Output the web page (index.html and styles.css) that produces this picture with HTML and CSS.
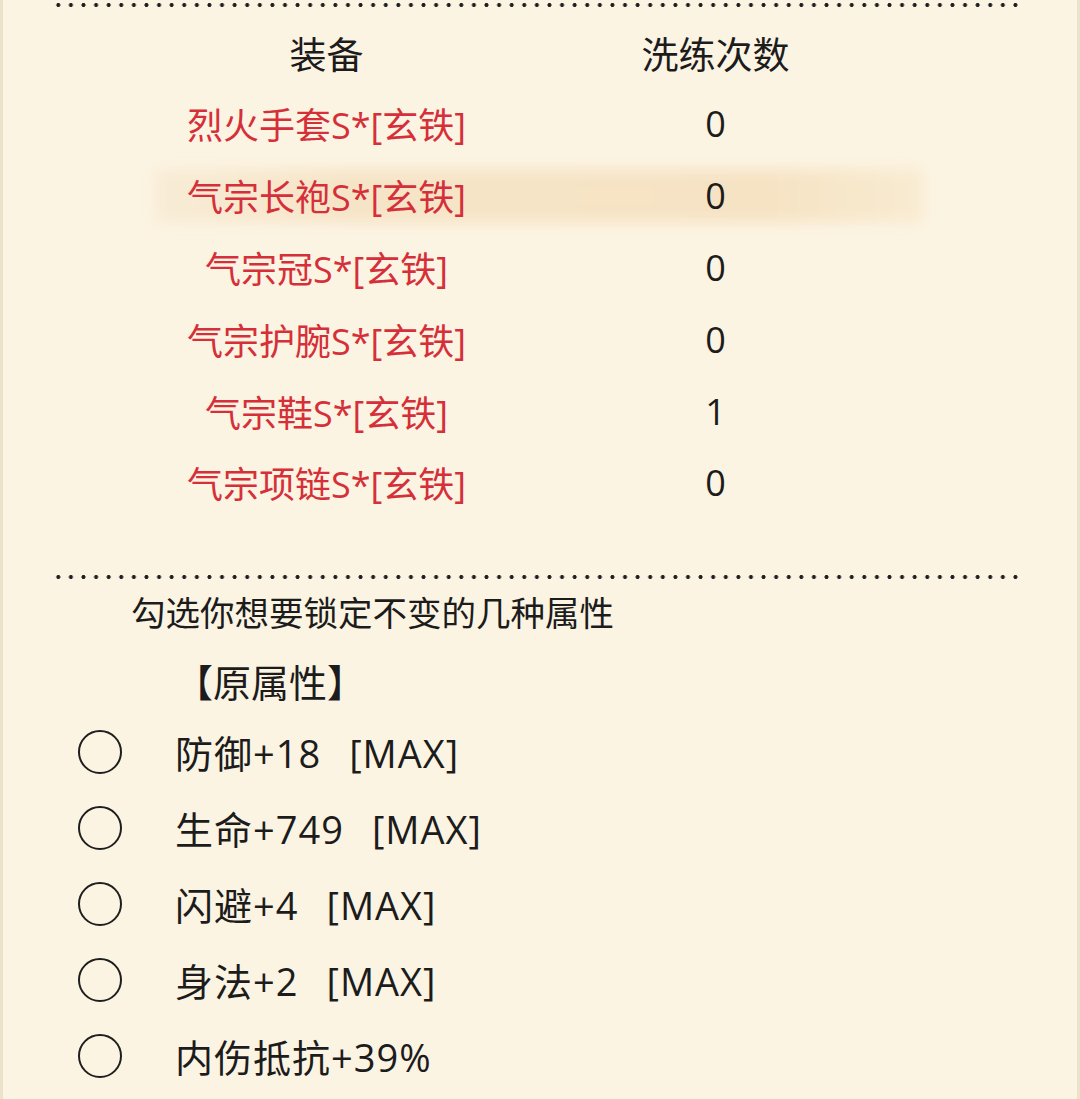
FILE: index.html
```html
<!DOCTYPE html>
<html lang="zh-CN">
<head>
    <meta charset="UTF-8">
    <meta name="viewport" content="width=device-width, initial-scale=1.0">
    <title>洗练</title>
    <link rel="stylesheet" href="styles.css">
</head>
<body>
    <div class="pagina">
        <div class="puntos puntos-arriba"></div>

        <table class="equipo">
            <thead>
                <tr>
                    <th>装备</th>
                    <th>洗练次数</th>
                </tr>
            </thead>
            <tbody>
                <tr>
                    <td class="nombre">烈火手套S*[玄铁]</td>
                    <td>0</td>
                </tr>
                <tr class="activo">
                    <td class="nombre">气宗长袍S*[玄铁]</td>
                    <td>0</td>
                </tr>
                <tr>
                    <td class="nombre">气宗冠S*[玄铁]</td>
                    <td>0</td>
                </tr>
                <tr>
                    <td class="nombre">气宗护腕S*[玄铁]</td>
                    <td>0</td>
                </tr>
                <tr>
                    <td class="nombre">气宗鞋S*[玄铁]</td>
                    <td>1</td>
                </tr>
                <tr>
                    <td class="nombre">气宗项链S*[玄铁]</td>
                    <td>0</td>
                </tr>
            </tbody>
        </table>

        <div class="puntos puntos-medio"></div>

        <p class="aviso">勾选你想要锁定不变的几种属性</p>
        <p class="titulo">【原属性】</p>

        <ul class="atributos">
            <li><span class="radio"></span><span class="texto">防御+18<span class="max">[MAX]</span></span></li>
            <li><span class="radio"></span><span class="texto">生命+749<span class="max">[MAX]</span></span></li>
            <li><span class="radio"></span><span class="texto">闪避+4<span class="max">[MAX]</span></span></li>
            <li><span class="radio"></span><span class="texto">身法+2<span class="max">[MAX]</span></span></li>
            <li><span class="radio"></span><span class="texto">内伤抵抗+39%</span></li>
        </ul>
    </div>
</body>
</html>
```

FILE: styles.css
```css
body {
    margin: 0;
    background-color: #fcf4e3;
    font-family: "Noto Sans CJK SC", sans-serif;
    color: #1c1c1c;
}

.pagina {
    height: 1099px;
    overflow: hidden;
    border-left: 3px solid #ece1c9;
    border-right: 3px solid #ece1c9;
    box-sizing: border-box;
}

/* lineas de puntos */
.puntos {
    height: 4px;
    margin: 0 55px 0 49px;
    background-image: radial-gradient(circle, #1e1e1e 1.7px, transparent 2.3px);
    background-size: 12.6px 4px;
    background-repeat: repeat-x;
}

.puntos-arriba {
    margin-top: 3px;
}

.puntos-medio {
    margin-top: 56px;
}

.equipo {
    margin-left: 129px;
    width: 778px;
    border-collapse: collapse;
    table-layout: fixed;
    font-family: "Open Sans", "Noto Sans CJK SC", sans-serif;
}

.equipo th {
    height: 70px;
    padding: 11px 0 0 0;
    font-size: 37px;
    font-weight: normal;
    text-align: center;
    vertical-align: middle;
}

.equipo td {
    height: 71.8px;
    padding: 0;
    font-size: 36px;
    text-align: center;
    vertical-align: middle;
    position: relative;
}

.equipo td.nombre {
    color: #d5303a;
}

/* fila seleccionada con brillo */
.equipo tr.activo td.nombre::before {
    content: "";
    position: absolute;
    top: 9px;
    bottom: 9px;
    left: 22px;
    right: -402px;
    background: linear-gradient(90deg, #f8ecd6, #f6e4c7 25%, #f6e3c4 80%, #f8ebd1);
    filter: blur(7px);
    z-index: -1;
}

.aviso {
    margin: 10px 0 0 128px;
    font-size: 34.5px;
    line-height: 44px;
}

.titulo {
    margin: 24px 0 0 172px;
    font-size: 38px;
    line-height: 48px;
}

.atributos {
    list-style: none;
    margin: 9px 0 0 0;
    padding: 0;
    font-family: "Open Sans", "Noto Sans CJK SC", sans-serif;
}

.atributos li {
    display: flex;
    align-items: center;
    height: 76px;
}

.radio {
    width: 40px;
    height: 40px;
    margin-left: 75px;
    border: 2px solid #1e1e1e;
    border-radius: 50%;
}

.texto {
    margin-left: 53px;
    font-size: 38px;
    letter-spacing: 1px;
}

.max {
    margin-left: 28px;
}
```
